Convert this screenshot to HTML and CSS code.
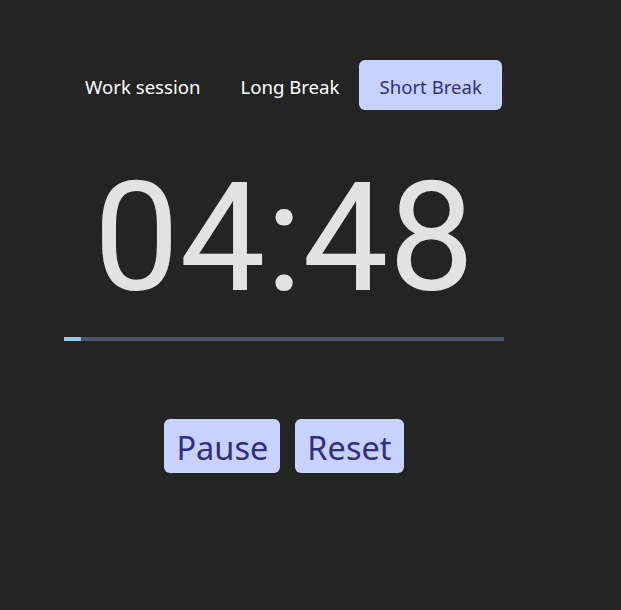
FILE: index.html
```html
<!DOCTYPE html>
<html>
<head>
<meta charset="utf-8">
<link rel="stylesheet" href="styles.css">
</head>
<body>
<main class="app">
  <nav class="tabs">
    <button class="tab">Work session</button>
    <button class="tab">Long Break</button>
    <button class="tab active">Short Break</button>
  </nav>
  <div class="timer">04:48</div>
  <div class="progress"><div class="fill" style="width:17px"></div></div>
  <div class="controls">
    <button class="ctl">Pause</button>
    <button class="ctl">Reset</button>
  </div>
</main>
</body>
</html>
```

FILE: styles.css
```css
html, body {
  margin: 0;
  padding: 0;
  background: #242424;
  height: 100%;
}
body {
  font-family: "Noto Sans", "Open Sans", sans-serif;
  color: #fff;
}
.app {
  width: 440px;
  margin-left: 64px;
  padding-top: 60px;
  display: flex;
  flex-direction: column;
  align-items: center;
}
.tabs {
  display: flex;
  gap: 0;
  margin-left: -1px;
}
.tab {
  font-family: inherit;
  font-size: 18.6px;
  height: 50px;
  padding: 2px 20px 0;
  border: none;
  border-radius: 6px;
  background: transparent;
  color: #ffffff;
}
.tab.active {
  background: #c7d2fe;
  color: #312e81;
}
.timer {
  font-family: Roboto, sans-serif;
  font-weight: 400;
  font-size: 153px;
  line-height: 1;
  color: #e2e2e2;
  margin-top: 51px;
}
.progress {
  align-self: stretch;
  height: 4px;
  background: #4a5568;
  margin-top: 23px;
}
.fill {
  height: 100%;
  background: #90caf9;
}
.controls {
  display: flex;
  gap: 15px;
  margin-top: 78px;
}
.ctl {
  font-family: inherit;
  font-size: 32.5px;
  height: 54px;
  padding: 3px 12px 0;
  border: none;
  border-radius: 6px;
  background: #c7d2fe;
  color: #312e81;
}
```
